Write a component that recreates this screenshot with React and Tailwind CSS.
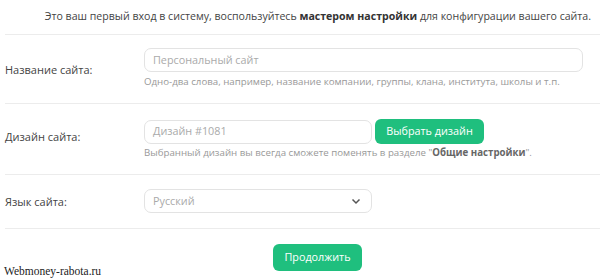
import React from "react";

export default function App() {
  return (
    <div className="w-[600px] h-[278px] bg-white relative overflow-hidden text-[#444]" style={{ fontFamily: '"Open Sans", "Noto Sans", sans-serif' }}>
      <div className="h-[35px] flex items-center justify-end pr-[9px] text-[10.6px] border-b border-[#ececec] ml-[5px] whitespace-nowrap">
        <span>
          Это ваш первый вход в систему, воспользуйтесь <b className="font-bold text-[#333]">мастером настройки</b> для конфигурации вашего сайта.
        </span>
      </div>

      <div className="ml-[5px] border-b border-[#ececec] pt-[13px] h-[69px] flex items-start">
        <div className="w-[139px] text-[11px] pt-[14px]">Название сайта:</div>
        <div className="flex flex-col">
          <div className="w-[439px] h-[24px] border border-[#e3e3e3] rounded-[7px] flex items-center px-[8px] text-[10.8px] text-[#aaa]">Персональный сайт</div>
          <div className="mt-[3px] text-[9.7px] text-[#999] whitespace-nowrap">Одно-два слова, например, название компании, группы, клана, института, школы и т.п.</div>
        </div>
      </div>

      <div className="ml-[5px] border-b border-[#ececec] pt-[15px] h-[71px] flex items-start">
        <div className="w-[139px] text-[11px] pt-[10px]">Дизайн сайта:</div>
        <div className="flex flex-col">
          <div className="flex items-center">
            <div className="w-[228px] h-[24px] border border-[#e3e3e3] rounded-[7px] flex items-center px-[8px] text-[10.8px] text-[#aaa]">Дизайн #1081</div>
            <button className="ml-[3px] w-[109px] h-[25px] rounded-[6px] bg-[#1fbf7e] text-white text-[10.8px]">Выбрать дизайн</button>
          </div>
          <div className="mt-[2px] text-[9.7px] text-[#999] whitespace-nowrap">
            Выбранный дизайн вы всегда сможете поменять в разделе "<b className="font-bold text-[#666]">Общие настройки</b>".
          </div>
        </div>
      </div>

      <div className="ml-[5px] border-b border-[#ececec] pt-[14px] h-[54px]">
        <div className="flex items-center">
          <div className="w-[139px] text-[11px] pt-[2px]">Язык сайта:</div>
          <div className="w-[228px] h-[24px] border border-[#e3e3e3] rounded-[7px] flex items-center justify-between px-[8px] text-[10.8px] text-[#aaa]">
            <span>Русский</span>
            <svg width="10" height="7" viewBox="0 0 10 7" className="mr-[2px]">
              <path d="M1.5 1.5 L5 5 L8.5 1.5" fill="none" stroke="#555" strokeWidth="1.5" />
            </svg>
          </div>
        </div>
      </div>

      <div className="flex justify-center pt-[15px] pl-[35px]">
        <button className="w-[89px] h-[27px] rounded-[6px] bg-[#1fbf7e] text-white text-[10.8px]">Продолжить</button>
      </div>

      <div className="absolute left-[4px] top-[263px] text-[11.5px] text-[#222]" style={{ fontFamily: '"Liberation Serif", serif' }}>Webmoney-rabota.ru</div>
    </div>
  );
}
